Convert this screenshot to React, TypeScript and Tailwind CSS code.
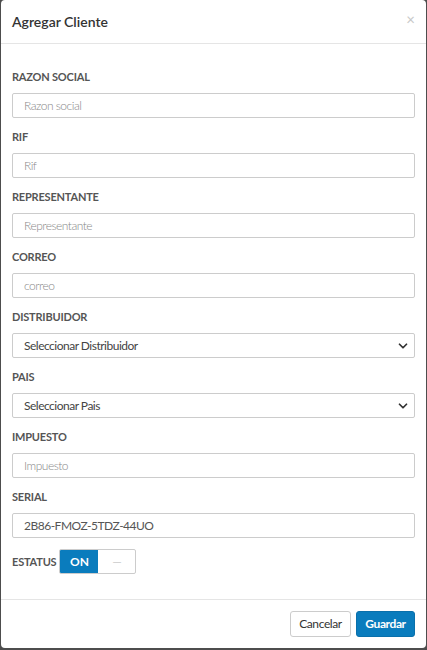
import { ChevronDown } from "lucide-react";

const fields = [
  { label: "RAZON SOCIAL", placeholder: "Razon social" },
  { label: "RIF", placeholder: "Rif" },
  { label: "REPRESENTANTE", placeholder: "Representante" },
  { label: "CORREO", placeholder: "correo" },
];

function Label({ children }: { children: string }) {
  return (
    <div className="h-4 text-[11px] leading-4 font-bold tracking-[-0.2px] text-[#555]">
      {children}
    </div>
  );
}

function TextInput({ placeholder, value }: { placeholder: string; value?: string }) {
  return (
    <div className="mt-2 mb-[11px] flex h-[25px] items-center rounded-[2px] border border-[#ccc] px-[11px] text-[12px] tracking-[-0.5px]">
      {value ? (
        <span className="text-[#555]">{value}</span>
      ) : (
        <span className="font-light text-[#888]">{placeholder}</span>
      )}
    </div>
  );
}

function Select({ text }: { text: string }) {
  return (
    <div className="mt-2 mb-[11px] flex h-[25px] items-center justify-between rounded-[2px] border border-[#ccc] pl-[11px] pr-[4px] text-[12px] tracking-[-0.5px] text-[#444]">
      <span>{text}</span>
      <ChevronDown className="h-[14px] w-[14px] text-[#333]" strokeWidth={3} />
    </div>
  );
}

export default function App() {
  return (
    <div
      className="min-h-[650px] bg-[#4d4d4d] pl-px"
      style={{ fontFamily: "Lato, 'Open Sans', sans-serif" }}
    >
      <div className="flex h-[648px] w-[425px] flex-col rounded-[4px] bg-white">
        <header className="flex h-11 items-center justify-between border-b border-[#e5e5e5] px-[11px]">
          <h1 className="text-[14px] font-semibold text-[#333]">Agregar Cliente</h1>
          <span className="-mt-1 text-[15px] leading-none text-[#c8c8c8]">×</span>
        </header>

        <div className="flex-1 px-[11px] pt-[25px]">
          {fields.map((f) => (
            <div key={f.label}>
              <Label>{f.label}</Label>
              <TextInput placeholder={f.placeholder} />
            </div>
          ))}
          <Label>DISTRIBUIDOR</Label>
          <Select text="Seleccionar Distribuidor" />
          <Label>PAIS</Label>
          <Select text="Seleccionar Pais" />
          <Label>IMPUESTO</Label>
          <TextInput placeholder="Impuesto" />
          <Label>SERIAL</Label>
          <TextInput placeholder="Serial" value="2B86-FMOZ-5TDZ-44UO" />

          <div className="flex items-center gap-[3px]">
            <Label>ESTATUS</Label>
            <div className="flex h-[25px] w-[77px] overflow-hidden rounded-[2px] border border-[#ccc]">
              <div className="flex w-[38px] items-center justify-center bg-[#0a7cbd] text-[12px] font-bold text-white">
                ON
              </div>
              <div className="flex flex-1 items-center justify-center text-[12px] text-[#ccc]">
                —
              </div>
            </div>
          </div>
        </div>

        <footer className="flex h-[49px] items-center justify-end gap-[5px] border-t border-[#e5e5e5] px-[11px]">
          <button className="h-[26px] w-[61px] rounded-[3px] border border-[#ccc] bg-white text-[12px] tracking-[-0.4px] text-[#333]">
            Cancelar
          </button>
          <button className="h-[26px] w-[59px] rounded-[3px] border border-[#0a70ab] bg-[#0a7cbd] text-[12px] font-bold tracking-[-0.4px] text-white">
            Guardar
          </button>
        </footer>
      </div>
    </div>
  );
}
